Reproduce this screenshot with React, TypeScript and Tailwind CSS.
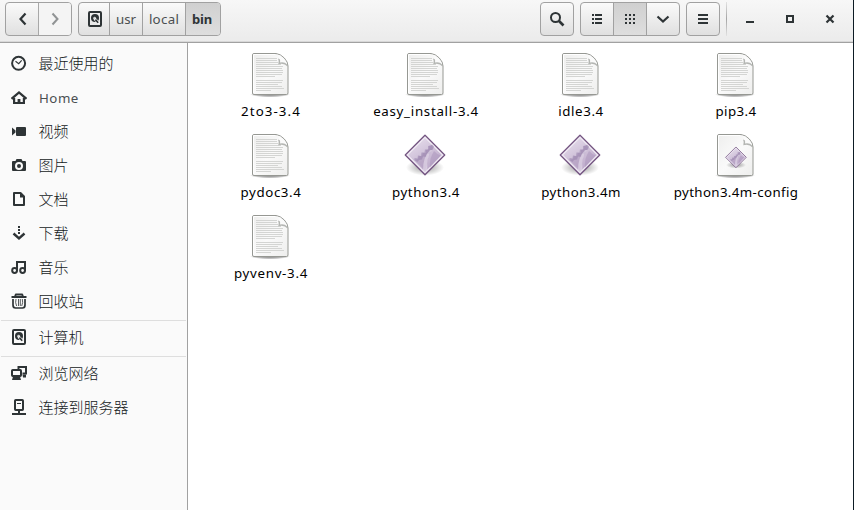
import type { ReactNode } from 'react';

const INK = '#2e3436';

function Icon({ children, className = '' }: { children: ReactNode; className?: string }) {
  return (
    <svg width="16" height="16" viewBox="0 0 16 16" fill="none" stroke={INK} strokeWidth="2" className={`block shrink-0 ${className}`}>
      {children}
    </svg>
  );
}

const Disk = () => (
  <Icon>
    <rect x="2" y="1" width="12" height="14" rx="1" />
    <circle cx="8" cy="7" r="4" fill={INK} stroke="none" />
    <circle cx="7.6" cy="7.2" r="1.4" fill="#cfd1d1" stroke="none" />
    <path d="M7.5 7.8l4.8 4.7" stroke="#f5f5f5" strokeWidth="2.6" />
    <path d="M8.4 8.6l2.8 3.2" strokeWidth="1.6" />
  </Icon>
);

const Clock = () => (
  <Icon>
    <circle cx="7.6" cy="8.3" r="6.5" />
    <path d="M4.5 6.2l3.2 2.5 3-3.4" strokeWidth="1.1" />
  </Icon>
);
const Home = () => (
  <Icon>
    <path d="M.5 8.8L8 2.4l7.500 6.4" strokeWidth="2.300" />
    <path d="M2 8h2.200v4h2.400V9h2.800v3h2.400V8H14v6H2z" fill={INK} stroke="none" />
  </Icon>
);
const Video = () => (
  <Icon>
    <path d="M1 4.500l3.500 3v2L1 12.500z" fill={INK} stroke="none" />
    <rect x="5" y="4" width="10" height="9" rx="1" fill={INK} stroke="none" />
  </Icon>
);
const Camera = () => (
  <Icon>
    <path d="M2 4h2.500l1-2h5l1 2H14q1 0 1 1v8q0 1-1 1H2q-1 0-1-1V5q0-1 1-1z" fill={INK} stroke="none" />
    <circle cx="8" cy="9" r="3" fill={INK} stroke="#fafafa" strokeWidth="2" />
  </Icon>
);
const Doc = () => (
  <Icon>
    <path d="M3 2h6.500L13 5.500V14H3z" strokeLinejoin="round" />
    <path d="M9 2v4.500h4.500z" fill={INK} stroke="none" />
  </Icon>
);
const Download = () => (
  <Icon>
    <path d="M8 1v2M8 4v2M8 7v2" />
    <path d="M2.500 8.500L8 13.500l5.500-5" strokeWidth="2.400" />
  </Icon>
);
const Music = () => (
  <Icon>
    <circle cx="3.600" cy="11.500" r="2.400" />
    <circle cx="11.600" cy="11.500" r="2.400" />
    <path d="M6 12V3h8v9" />
  </Icon>
);
const Trash = () => (
  <Icon>
    <path d="M.5 4h15M4 3l1-1.500h6L12 3" />
    <path d="M2 6v6q0 3 2.500 3h7q2.500 0 2.500-3V6" strokeWidth="1.700" />
    <path d="M5 6q-1 3.500.6 7M7.500 6v7M9.300 6v7M11.300 6q1 3.500-.6 7" strokeWidth=".8" />
  </Icon>
);
const Network = () => (
  <Icon>
    <path d="M7.500 4V2H15v6.500h-3.500" />
    <path d="M11.500 9.500h3.500v3h-3z" fill={INK} stroke="none" />
    <rect x="1" y="5" width="9" height="6" rx=".7" />
    <path d="M2 11.500h7l1 3.500H1z" fill={INK} stroke="none" />
  </Icon>
);
const Server = () => (
  <Icon>
    <rect x="4" y="1" width="8" height="10" rx=".7" />
    <path d="M6 4.500h4" strokeWidth="1" />
    <path d="M8 11v4M1 15h14" />
  </Icon>
);

const places: { label: string; icon: ReactNode; sep?: boolean }[] = [
  { label: '最近使用的', icon: <Clock /> },
  { label: 'Home', icon: <Home /> },
  { label: '视频', icon: <Video /> },
  { label: '图片', icon: <Camera /> },
  { label: '文档', icon: <Doc /> },
  { label: '下载', icon: <Download /> },
  { label: '音乐', icon: <Music /> },
  { label: '回收站', icon: <Trash /> },
  { label: '计算机', icon: <Disk />, sep: true },
  { label: '浏览网络', icon: <Network />, sep: true },
  { label: '连接到服务器', icon: <Server /> },
];

function Paper({ script = false }: { script?: boolean }) {
  const lines = [21, 21, 22, 25, 27, 26, 27, 27, 26, 19];
  return (
    <svg width="48" height="48" viewBox="0 0 48 48" className="mr-px block">
      <ellipse cx="24" cy="43.500" rx="20" ry="2.800" fill="url(#shade)" />
      <path d="M8 2.500h22q4.500.5 8.300 4.500 3.700 4 3.700 8V42q0 1.500-1.500 1.500H8Q6.500 43.500 6.500 42V4Q6.500 2.500 8 2.500z" fill="url(#paper)" stroke="#969893" />
      <path d="M7.500 42V3.500H29" fill="none" stroke="#fff" />
      {!script && (
        <g stroke="#d4d5d3" strokeWidth="1">
          {lines.map((w, i) => (
            <path key={i} d={`M10 ${7.5 + i * 2}h${w}`} />
          ))}
          <path d="M10 29.500h27M10 31.500h26M10 33.500h22M10 35.500h26M10 37.500h28M10 39.500h15" />
        </g>
      )}
      <path d="M32 7.500q1.500 3 .3 5.800 6-1.500 9.200 2.200V14l-4-4z" fill="#a3a5a1" opacity=".8" />
      <path d="M30.500 3.200q4.200 3 3.600 8.300 4.600-.7 7.200 1.700-1-3-3.600-5.700-3-3.300-7.200-4.300z" fill="#fbfbfb" />
      {script && (
        <>
          <ellipse cx="25" cy="33" rx="10" ry="3.500" fill="url(#soft)" />
          <g transform="translate(13.900 14.300) scale(.525)"><DiamondShape /></g>
        </>
      )}
    </svg>
  );
}

function DiamondShape() {
  return (
    <>
      <path d="M21 1.300L40.700 21 21 40.700 1.300 21z" fill="url(#violet)" stroke="#735480" strokeWidth="1.400" strokeLinejoin="round" />
      <path d="M21 3.300L38.700 21 21 38.700 3.300 21z" fill="none" stroke="#efe9f3" strokeWidth="1.300" />
      <path d="M21 36L8 24l3 2 3-1 1-3 3 0 1-3 3 0 0-3 3-1 0-3 3-1 1 3-2 3-3 6-1 8z" fill="#a893b9" opacity=".45" />
      <path d="M10.500 26v-2l3 .5.500-3 3 .5.500-3.500h3l.500-3h3l0-3.500 3-.5 1-1 2 2-1 3-2.500 1-.5 3-3 .5-1 3-3-.5-1 3-3 .5-1.500 2z" fill="#917ca7" opacity=".5" />
      <path d="M28 16q-6 7-4.500 20.500L21 38l-2-2q0-13 7-20z" fill="#f1ebf6" opacity=".5" />
      <path d="M30 17q-5 8-4 16.500L36.500 21.500l-3-1.500z" fill="#a691b8" opacity=".45" />
    </>
  );
}

function Diamond() {
  return (
    <svg width="48" height="48" viewBox="0 0 48 48" className="mr-px block">
      <ellipse cx="24" cy="35.500" rx="19" ry="8" fill="url(#soft)" />
      <g transform="translate(3 2)"><DiamondShape /></g>
    </svg>
  );
}

const files: { name: string; kind: 'text' | 'exec' | 'script'; tracking: string }[] = [
  { name: '2to3-3.4', kind: 'text', tracking: 'tracking-[1.1px]' },
  { name: 'easy_install-3.4', kind: 'text', tracking: 'tracking-[0.72px]' },
  { name: 'idle3.4', kind: 'text', tracking: 'tracking-[0.6px]' },
  { name: 'pip3.4', kind: 'text', tracking: 'tracking-[0.4px]' },
  { name: 'pydoc3.4', kind: 'text', tracking: 'tracking-[0.6px]' },
  { name: 'python3.4', kind: 'exec', tracking: 'tracking-[0.6px]' },
  { name: 'python3.4m', kind: 'exec', tracking: 'tracking-[0.45px]' },
  { name: 'python3.4m-config', kind: 'script', tracking: 'tracking-[0.37px]' },
  { name: 'pyvenv-3.4', kind: 'text', tracking: 'tracking-[0.7px]' },
];

const group = 'flex h-[34px] overflow-hidden rounded-[4px] border border-[#a1a1a1] bg-linear-to-b from-[#fafafa] to-[#e0e0e0]';
const cell = 'flex items-center justify-center';
const active = 'bg-linear-to-b from-[#d0d0d0] to-[#dedede]';

export default function App() {
  return (
    <div className="flex h-[510px] w-[854px] overflow-hidden bg-[#0d1b24] font-['Noto_Sans','Noto_Sans_CJK_SC',sans-serif] text-[#2e3436]">
      <svg width="0" height="0" className="absolute">
        <defs>
          <linearGradient id="paper" x1="0" y1="0" x2="1" y2="1"><stop offset="0" stopColor="#eeeeed" /><stop offset=".5" stopColor="#fafafa" /><stop offset="1" stopColor="#eeeeed" /></linearGradient>
          <linearGradient id="violet" x1="0" y1="0" x2=".6" y2="1"><stop offset="0" stopColor="#eee8f2" /><stop offset="1" stopColor="#b8a3c6" /></linearGradient>
          <radialGradient id="shade"><stop offset="0" stopColor="#000" stopOpacity=".5" /><stop offset=".7" stopColor="#000" stopOpacity=".25" /><stop offset="1" stopColor="#000" stopOpacity="0" /></radialGradient>
          <radialGradient id="soft"><stop offset="0" stopColor="#000" stopOpacity=".4" /><stop offset="1" stopColor="#000" stopOpacity="0" /></radialGradient>
        </defs>
      </svg>
      <div className="flex w-[853px] flex-col bg-white">
        <header className="flex h-[43px] shrink-0 items-start border-b border-[#a1a1a1] bg-linear-to-b from-[#f7f7f7] to-[#ebebeb] pt-[2px] pl-[5px] shadow-[inset_0_-1px_#d8d8d8]">
          <div className={`${group} w-[67px]`}>
            <div className={`${cell} w-[32px] pl-px`}><Icon><path d="M10.500 2.500L5.500 8l5 5.500" strokeWidth="2.200" /></Icon></div>
            <div className={`${cell} flex-1 border-l border-[#a8a8a8] bg-[#f4f4f4] pr-px`}><Icon className="opacity-50"><path d="M5.500 2.500L10.500 8l-5 5.500" /></Icon></div>
          </div>
          <div className={`${group} ml-[6px] w-[143px] text-[13.300px]`}>
            <div className={`${cell} w-[30px] pl-px`}><Disk /></div>
            <div className={`${cell} w-[33px] border-l border-[#a1a1a1] pt-px text-[#4a4f51]`}>usr</div>
            <div className={`${cell} w-[43px] border-l border-[#a1a1a1] pt-px tracking-[0.3px] text-[#4a4f51]`}>local</div>
            <div className={`${cell} flex-1 border-l border-[#a1a1a1] pt-px pr-[2px] text-[13px] font-bold tracking-[-0.2px] ${active}`}>bin</div>
          </div>
          <div className="flex-1" />
          <div className={`${group} w-[34px]`}>
            <div className={`${cell} flex-1`}><Icon><circle cx="6.500" cy="6.500" r="4.500" /><path d="M10 10l4.500 4.500" strokeWidth="2.600" /></Icon></div>
          </div>
          <div className={`${group} ml-[6px] w-[100px]`}>
            <div className={`${cell} w-[32px]`}><Icon><path d="M3 4h2M3 8h2M3 12h2M6 4h7M6 8h7M6 12h7" shapeRendering="crispEdges" /></Icon></div>
            <div className={`${cell} w-[34px] border-x border-[#a1a1a1] ${active}`}><Icon><path d="M3 4h2M7 4h2M11 4h2M3 8h2M7 8h2M11 8h2M3 12h2M7 12h2M11 12h2" shapeRendering="crispEdges" /></Icon></div>
            <div className={`${cell} flex-1`}><Icon><path d="M2.500 5.500L8 10.500l5.500-5" strokeWidth="2.200" /></Icon></div>
          </div>
          <div className={`${group} ml-[6px] w-[34px]`}>
            <div className={`${cell} flex-1`}><Icon><path d="M3 4h10M3 8h10M3 12h10" shapeRendering="crispEdges" /></Icon></div>
          </div>
          <div className="ml-[6px] h-[34px] w-px bg-linear-to-b from-[#e2e2e2] via-[#a5a5a5] to-[#e2e2e2]" />
          <div className="flex h-[34px] w-[126px] items-center gap-[24px] pl-[15px]">
            <Icon><path d="M4 11h8" shapeRendering="crispEdges" /></Icon>
            <Icon><rect x="5" y="5" width="6" height="6" shapeRendering="crispEdges" /></Icon>
            <Icon><path d="M4.500 4.500l7 7M11.500 4.500l-7 7" strokeWidth="2.200" /></Icon>
          </div>
        </header>
        <div className="flex min-h-0 flex-1">
          <aside className="w-[188px] shrink-0 border-r border-[#a1a1a1] bg-[#fafafa] pt-[3px]">
            {places.map((p) => (
              <div key={p.label}>
                {p.sep && <div className="mt-[2px] mr-px -mb-px ml-px h-px bg-[#dedede]" />}
                <div className={`flex h-[34px] items-center pl-[11px] ${p.label === 'Home' ? 'pt-[2px]' : ''}`}>
                  {p.icon}
                  <span className={p.label === 'Home' ? 'ml-[12px] pt-px text-[13.300px] tracking-[0.500px] text-[#4a4f51]' : 'ml-[11.5px] text-[15px] leading-[20px] font-light text-[#14191b]'}>{p.label}</span>
                </div>
              </div>
            ))}
          </aside>
          <main className="grid flex-1 auto-rows-[81px] grid-cols-[repeat(4,155px)] content-start pt-[8px] pl-[5px] text-black">
            {files.map((f) => (
              <div key={f.name} className="flex flex-col items-center">
                {f.kind === 'exec' ? <Diamond /> : <Paper script={f.kind === 'script'} />}
                <span className={`mt-[2px] pl-px text-[13.300px] leading-[20px] whitespace-nowrap ${f.tracking}`}>{f.name}</span>
              </div>
            ))}
          </main>
        </div>
      </div>
    </div>
  );
}
